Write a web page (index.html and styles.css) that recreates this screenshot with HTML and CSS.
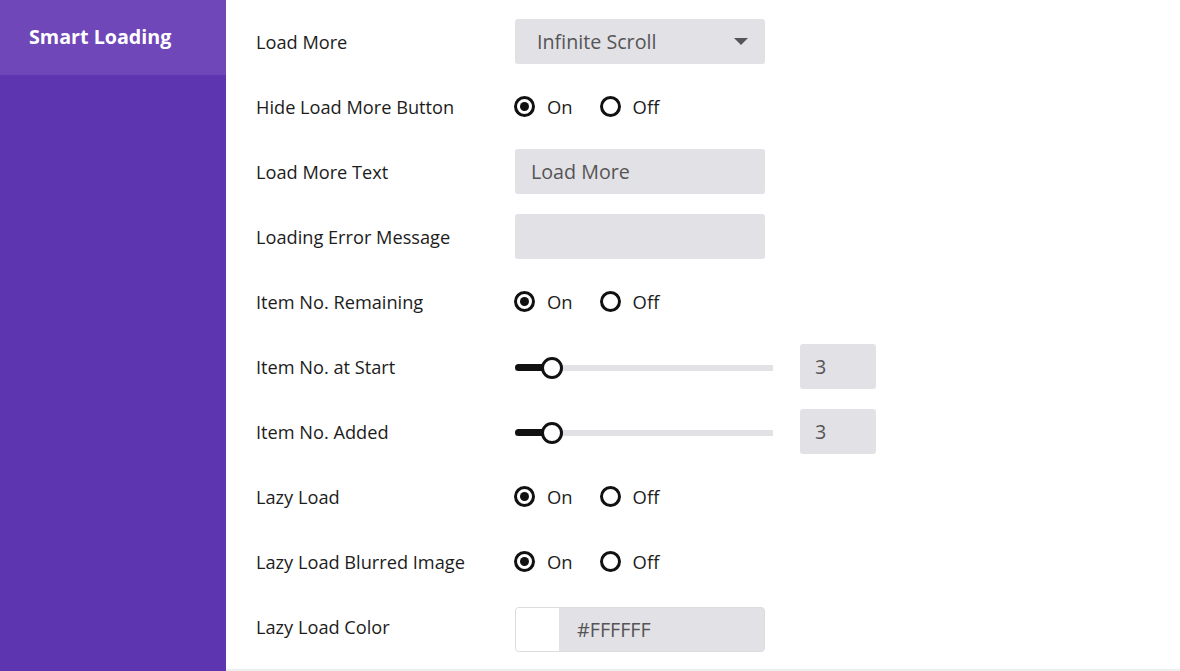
FILE: index.html
```html
<!DOCTYPE html>
<html>
<head>
<meta charset="utf-8">
<link rel="stylesheet" href="styles.css">
</head>
<body>
<div class="app">
  <aside class="sidebar">
    <div class="side-item">Smart Loading</div>
  </aside>
  <main class="main">
    <div class="row">
      <div class="label">Load More</div>
      <div class="select"><span>Infinite Scroll</span><span class="caret"></span></div>
    </div>
    <div class="row">
      <div class="label">Hide Load More Button</div>
      <div class="radios"><span class="radio on"></span><span class="rtext">On</span><span class="radio"></span><span class="rtext">Off</span></div>
    </div>
    <div class="row">
      <div class="label">Load More Text</div>
      <div class="input placeholder">Load More</div>
    </div>
    <div class="row">
      <div class="label">Loading Error Message</div>
      <div class="input"></div>
    </div>
    <div class="row">
      <div class="label">Item No. Remaining</div>
      <div class="radios"><span class="radio on"></span><span class="rtext">On</span><span class="radio"></span><span class="rtext">Off</span></div>
    </div>
    <div class="row">
      <div class="label">Item No. at Start</div>
      <div class="slider"><div class="fill"></div><div class="knob"></div></div>
      <div class="num">3</div>
    </div>
    <div class="row">
      <div class="label">Item No. Added</div>
      <div class="slider"><div class="fill"></div><div class="knob"></div></div>
      <div class="num">3</div>
    </div>
    <div class="row">
      <div class="label">Lazy Load</div>
      <div class="radios"><span class="radio on"></span><span class="rtext">On</span><span class="radio"></span><span class="rtext">Off</span></div>
    </div>
    <div class="row">
      <div class="label">Lazy Load Blurred Image</div>
      <div class="radios"><span class="radio on"></span><span class="rtext">On</span><span class="radio"></span><span class="rtext">Off</span></div>
    </div>
    <div class="row">
      <div class="label">Lazy Load Color</div>
      <div class="color"><span class="swatch"></span><span class="hex">#FFFFFF</span></div>
    </div>
  </main>
</div>
</body>
</html>
```
FILE: styles.css
```css
* { box-sizing: border-box; }
html, body { margin: 0; padding: 0; }
body {
  font-family: "Open Sans", "Liberation Sans", sans-serif;
  background: #fff;
  color: #1a1a1a;
  width: 1180px;
  height: 671px;
  overflow: hidden;
}
.app { display: flex; height: 671px; }
.sidebar {
  width: 226px;
  flex: none;
  background: #5e35b1;
}
.side-item {
  height: 75px;
  background: #7047b9;
  color: #fff;
  font-weight: 700;
  font-size: 19.7px;
  padding-left: 29px;
  display: flex;
  align-items: center;
  padding-bottom: 2px;
}
.main {
  flex: 1;
  padding: 19px 0 0 30px;
  display: flex;
  flex-direction: column;
  gap: 20px;
  border-bottom: 2px solid #eeeeee;
}
.row {
  display: flex;
  align-items: center;
  height: 45px;
}
.label {
  width: 259px;
  font-size: 18.2px;
  color: #1c1c1c;
  padding-top: 1px;
}
.select, .input {
  width: 250px;
  height: 45px;
  background: #e2e1e6;
  border-radius: 3px;
  display: flex;
  align-items: center;
  font-size: 19.7px;
  color: #555;
}
.select { padding-left: 22px; padding-right: 17px; justify-content: space-between; }
.caret {
  width: 0; height: 0;
  border-left: 7px solid transparent;
  border-right: 7px solid transparent;
  border-top: 7px solid #555;
}
.input { padding-left: 16px; }
.radios { display: flex; align-items: center; font-size: 18.4px; }
.radio {
  width: 21px; height: 21px;
  border: 3px solid #111;
  border-radius: 50%;
  display: inline-flex;
  align-items: center;
  justify-content: center;
  margin-left: -1px;
}
.radio.on::after {
  content: "";
  width: 9px; height: 9px;
  border-radius: 50%;
  background: #111;
}
.rtext { margin-left: 12px; margin-right: 28px; color: #1c1c1c; }
.slider {
  width: 258px;
  height: 6px;
  background: #e2e1e6;
  position: relative;
  margin-top: 2px;
}
.fill {
  position: absolute; left: 0; top: -1px;
  width: 30px; height: 7px;
  background: #111;
  border-radius: 4px;
}
.knob {
  position: absolute; left: 26px; top: -8px;
  width: 22px; height: 22px;
  border-radius: 50%;
  border: 3px solid #111;
  background: #fff;
}
.num {
  margin-left: 27px;
  width: 76px; height: 45px;
  background: #e2e1e6;
  border-radius: 3px;
  font-size: 19.7px;
  color: #555;
  display: flex; align-items: center;
  padding-left: 15px;
}
.color {
  width: 250px; height: 45px;
  margin-top: 6px;
  display: flex;
  border: 1px solid #dcdbe0;
  border-radius: 4px;
  overflow: hidden;
  background: #e2e1e6;
}
.swatch { width: 43px; background: #fff; }
.hex { display: flex; align-items: center; padding-left: 18px; font-size: 19.7px; color: #555; }
```
